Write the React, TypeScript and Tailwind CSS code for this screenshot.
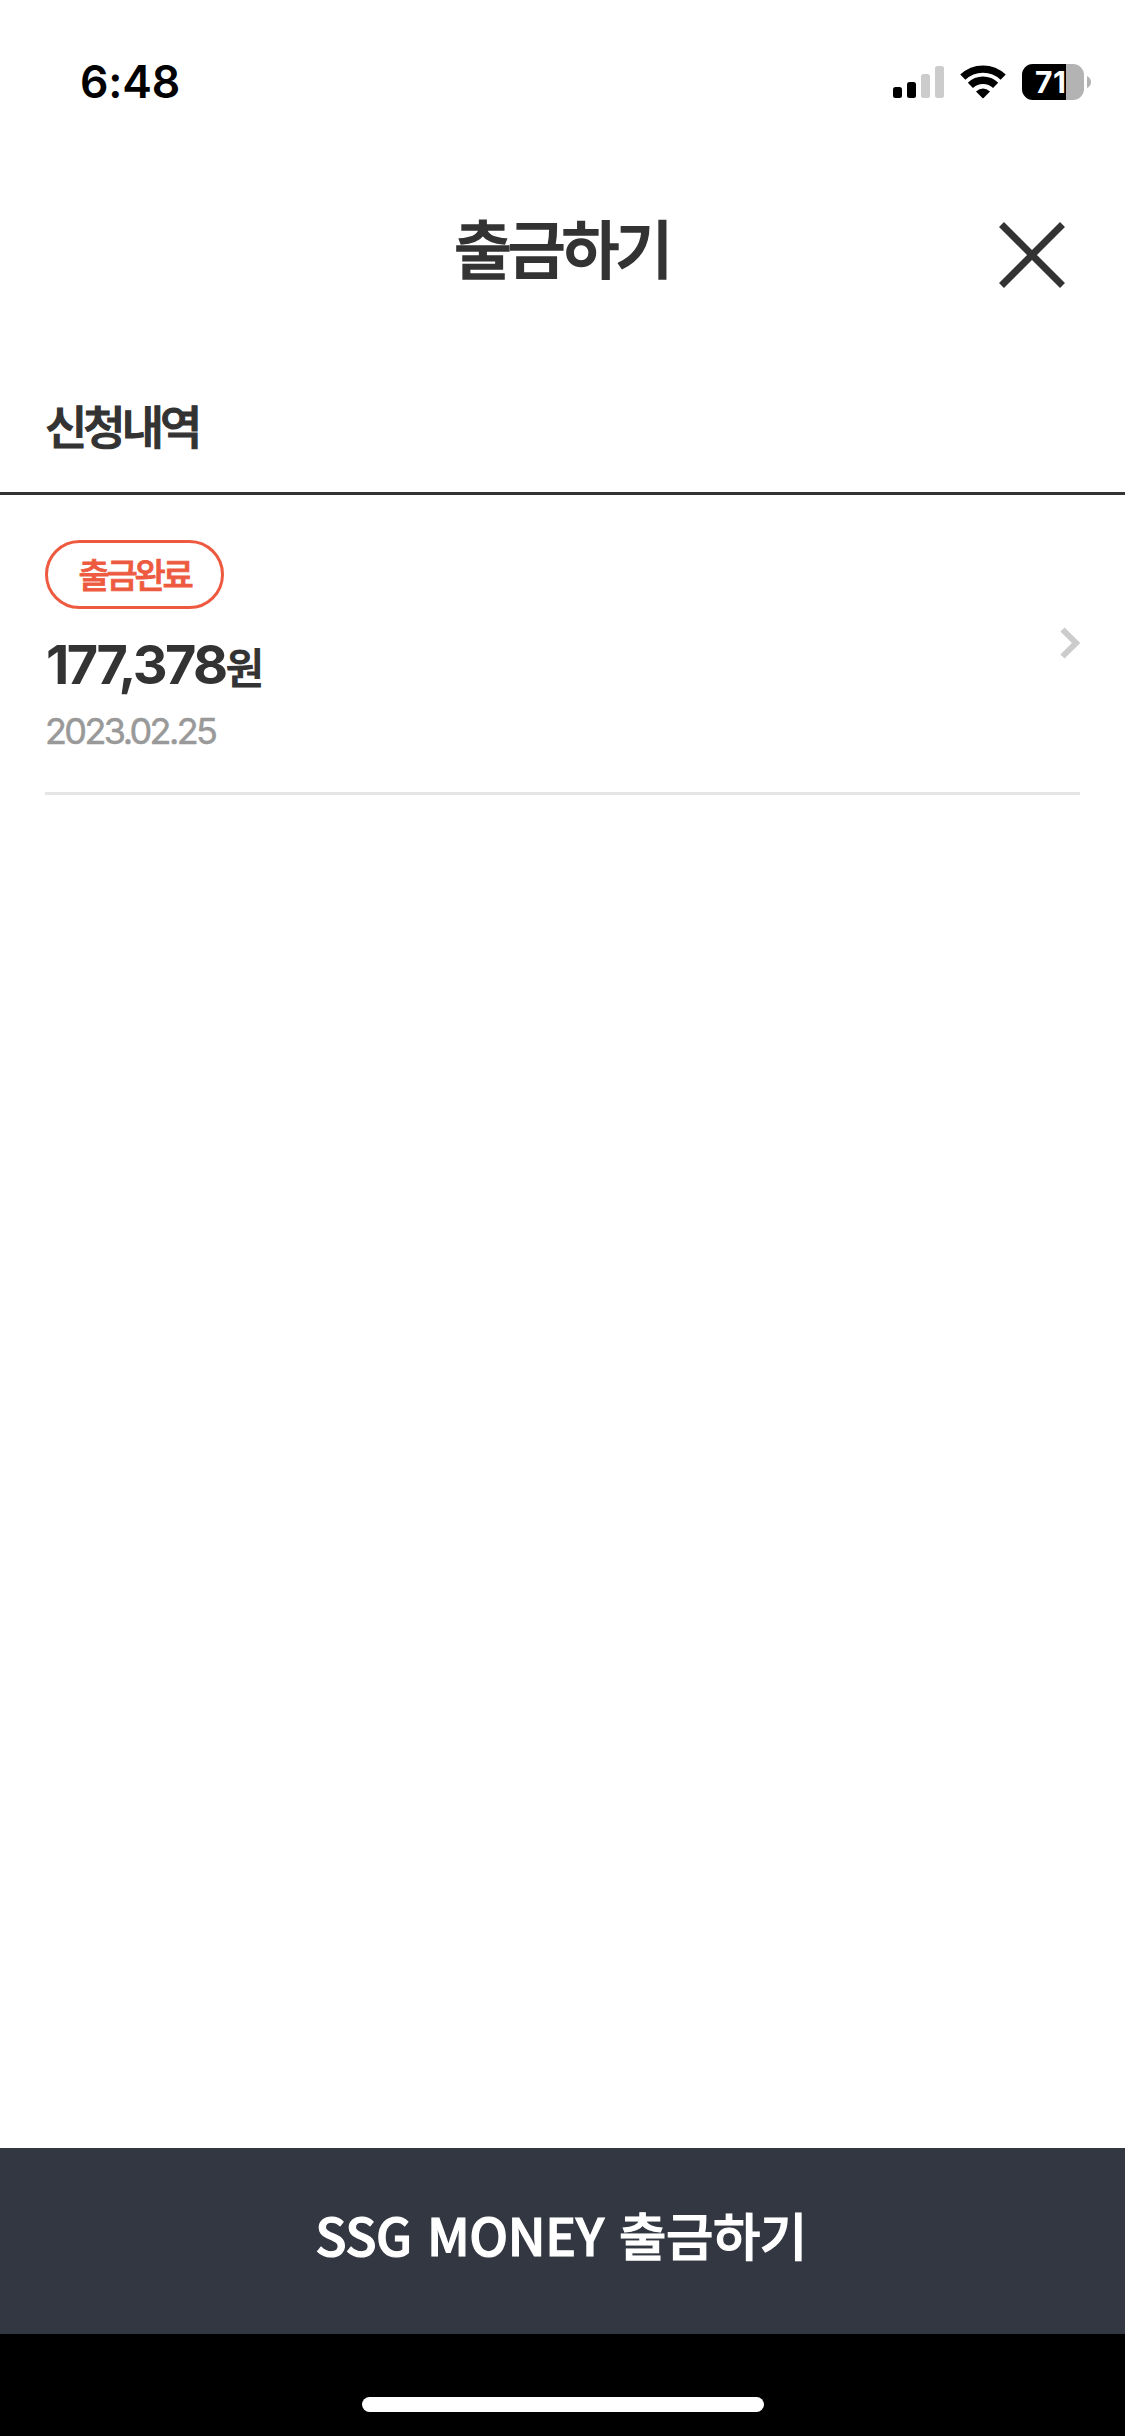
import React from "react";

const SignalIcon = () => (
  <svg width="51" height="32" viewBox="0 0 51 32">
    <rect x="0" y="21" width="9" height="11" rx="2.5" fill="#000" />
    <rect x="14" y="16" width="9" height="16" rx="2.5" fill="#000" />
    <rect x="28" y="8" width="9" height="24" rx="2.5" fill="#ccc" />
    <rect x="42" y="0" width="9" height="32" rx="2.5" fill="#ccc" />
  </svg>
);

const WifiIcon = () => (
  <svg width="46" height="34" viewBox="0 0 46 34">
    <path d="M2.8 12.2A29.2 29.2 0 0 1 43.2 12.2" fill="none" stroke="#000" strokeWidth="7.4" />
    <path d="M10.4 20.3A18.2 18.2 0 0 1 35.6 20.3" fill="none" stroke="#000" strokeWidth="7.4" />
    <path d="M16 26.6Q23 20.4 30 26.6L23.6 32.9Q23 33.5 22.4 32.9Z" fill="#000" />
  </svg>
);

const BatteryIcon = ({ level }: { level: number }) => (
  <div className="flex items-center gap-[3px]">
    <div className="relative flex h-9 w-[62px] items-center overflow-hidden rounded-[11px] bg-[#b3b3b3]">
      <div className="h-full bg-black" style={{ width: `${level}%` }} />
      <span className="absolute left-[13px] text-[30px] leading-9 font-bold tracking-[0.5px] text-white">{level}</span>
    </div>
    <svg width="4" height="12" viewBox="0 0 4 12">
      <path d="M0 0Q4 2 4 6T0 12Z" fill="#b3b3b3" />
    </svg>
  </div>
);

const StatusBar = () => (
  <div className="flex h-[164px] items-start justify-between pt-16 pr-[34px] pl-20">
    <span className="text-[44.5px] leading-9 font-semibold tracking-[-0.2px]">6:48</span>
    <div className="flex items-center">
      <SignalIcon />
      <div className="mr-4 ml-4">
        <WifiIcon />
      </div>
      <BatteryIcon level={71} />
    </div>
  </div>
);

const requests = [{ status: "출금완료", amount: "177,378", date: "2023.02.25" }];

export default function App() {
  return (
    <div className="flex h-[2436px] w-[1125px] flex-col bg-white font-['Inter','Noto_Sans_CJK_KR',sans-serif] text-black">
      <StatusBar />

      <header className="grid h-[172px] grid-cols-[1fr_auto_1fr] items-start text-[#333]">
        <h1 className="col-start-2 pt-[46px] pr-0.5 text-[63px] leading-[80px] font-medium tracking-[-4.2px] [-webkit-text-stroke:1.5px_#333]">
          출금하기
        </h1>
        <button className="mt-[58px] mr-[60px] justify-self-end" aria-label="닫기">
          <svg width="66" height="66" viewBox="0 0 66 66">
            <path d="M2.5 2.5L63.5 63.5M63.5 2.5L2.5 63.5" stroke="#333" strokeWidth="7" />
          </svg>
        </button>
      </header>

      <h2 className="h-[159px] border-b-[3px] border-[#353236] pt-[61px] pl-[45px] text-[46px] leading-[60px] font-medium tracking-[-4px] text-[#333] [-webkit-text-stroke:1.2px_#333]">
        신청내역
      </h2>

      <main className="flex-1 px-[45px]">
        {requests.map((r) => (
          <div key={r.date} className="flex h-[300px] items-start justify-between border-b-[3px] border-[#e5e5e5] pt-[45px]">
            <div className="flex flex-col items-start">
              <span className="flex h-[69px] w-[179px] items-center justify-center rounded-full border-[3px] border-[#ee5a40] pt-0.5 text-[34px] font-medium tracking-[-3.3px] text-[#ee5a40] [-webkit-text-stroke:0.8px_#ee5a40]">
                {r.status}
              </span>
              <p className="mt-6 pl-px leading-[64px] text-[#333]">
                <span className="text-[54px] font-bold tracking-[-2.6px]">{r.amount}</span>
                <span className="text-[42px] font-medium [-webkit-text-stroke:1px_#333]">원</span>
              </p>
              <p className="-mt-1 text-[36px] leading-[50px] tracking-[-2.6px] text-[#999] [-webkit-text-stroke:0.5px_#999]">{r.date}</p>
            </div>
            <svg className="mt-[87px]" width="20" height="32" viewBox="0 0 20 32">
              <path d="M2.5 2.5L16 16L2.5 29.5" fill="none" stroke="#ccc" strokeWidth="6" />
            </svg>
          </div>
        ))}
      </main>

      <button className="flex h-[186px] items-center justify-center bg-[#333741] pr-[3px] pb-[14px] font-['Noto_Sans_CJK_KR',sans-serif] text-[51.5px] font-medium tracking-[-0.4px] text-white [word-spacing:4px] [-webkit-text-stroke:1.2px_#fff]">
        SSG MONEY 출금하기
      </button>
      <div className="flex h-[102px] justify-center bg-black pt-[63px]">
        <div className="h-[15px] w-[402px] rounded-full bg-white" />
      </div>
    </div>
  );
}
